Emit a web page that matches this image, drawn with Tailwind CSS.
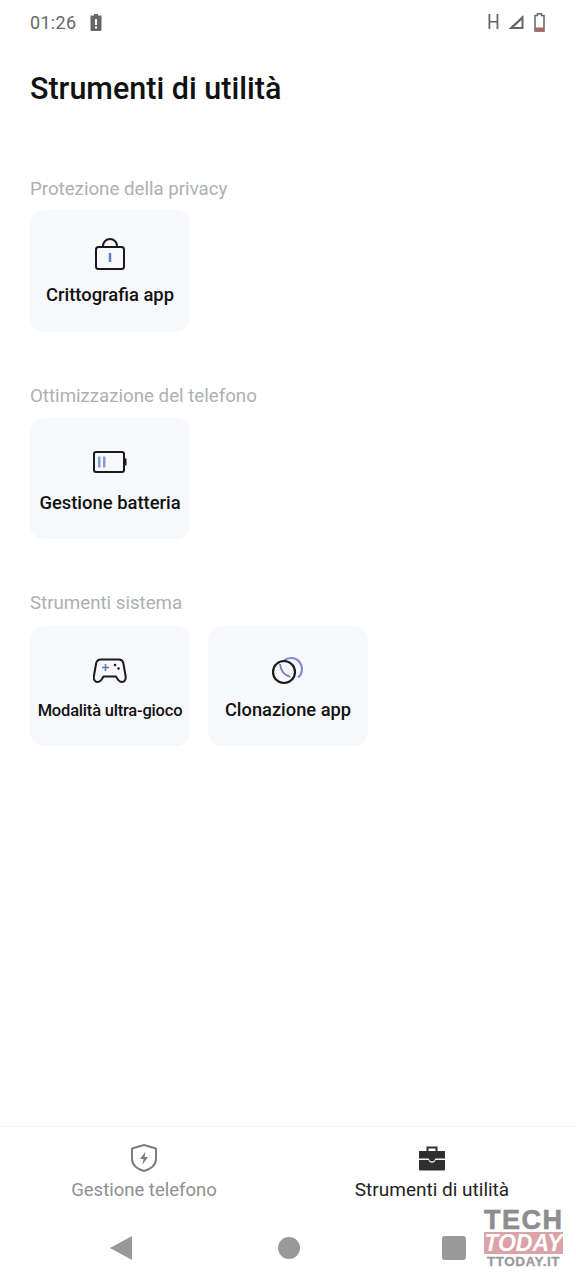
<!DOCTYPE html>
<html lang="en">
<head>
  <meta charset="UTF-8" />
  <meta name="viewport" content="width=device-width, initial-scale=1.0"/>
  <title>Strumenti di utilità</title>
  <script src="https://cdn.jsdelivr.net/npm/@tailwindcss/browser@4"></script>
</head>
<body class="bg-white font-['Roboto',sans-serif] text-[#111]">
<div class="relative w-[576px] h-[1280px] overflow-hidden flex flex-col">

  <!-- status bar -->
  <div class="h-[44px] pl-[30px] pr-[31px] flex items-center justify-between text-[#666]">
    <div class="flex items-center gap-[14px]">
      <span class="text-[18px] tracking-[0.3px]">01:26</span>
      <svg width="12" height="17" viewBox="0 0 12 17"><path d="M4 0h4v1.500h2.500a1 1 0 0 1 1 1V16a1 1 0 0 1-1 1h-9a1 1 0 0 1-1-1V2.500a1 1 0 0 1 1-1H4z" fill="#666"/><rect x="5" y="5" width="2" height="6" fill="#fff"/><rect x="5" y="12.500" width="2" height="2" fill="#fff"/></svg>
    </div>
    <div class="flex items-center">
      <span class="text-[21px] leading-none scale-x-85">H</span>
      <svg class="ml-[7px]" width="16" height="16" viewBox="0 0 16 16"><path d="M15.500 1v14H.5z M13.500 6 6 13h7.500z" fill="#666" fill-rule="evenodd"/></svg>
      <svg class="ml-[10px]" width="11" height="19" viewBox="0 0 11 19"><path d="M3.500.75h4V2.500H10v15.500H1V2.500h2.500z" fill="none" stroke="#666" stroke-width="1.500"/><rect x="1" y="14.500" width="9" height="4" fill="#a8686c"/></svg>
    </div>
  </div>

  <h1 class="ml-[30px] mt-[26px] text-[30.5px] leading-[38px] font-medium text-[#111]">Strumenti di utilità</h1>

  <main class="px-[30px] pt-[69px] flex-1 flex flex-col gap-[52px]">
    <section>
      <h2 class="text-[18.7px] leading-[24px] text-[#adb0b3] mb-[9px]">Protezione della privacy</h2>
      <div class="flex gap-[18px]">
        <div class="w-[160px] h-[122px] rounded-[14px] bg-[#f7f8fc] flex flex-col items-center pt-[28px]">
          <svg width="32" height="34" viewBox="0 0 32 34" fill="none"><path d="M9 8a7 7 0 0 1 14 0" stroke="#1a1a1a" stroke-width="2"/><rect x="2" y="9" width="28" height="22" rx="2.500" stroke="#1a1a1a" stroke-width="2"/><rect x="14.750" y="15" width="2.500" height="9" fill="#5d7fc8"/></svg>
          <span class="mt-[11px] text-[18.4px] leading-[24px] font-medium whitespace-nowrap">Crittografia app</span>
        </div>
      </div>
    </section>

    <section>
      <h2 class="text-[18.7px] leading-[24px] text-[#adb0b3] mb-[10px]">Ottimizzazione del telefono</h2>
      <div class="flex gap-[18px]">
        <div class="w-[160px] h-[121px] rounded-[14px] bg-[#f7f8fc] flex flex-col items-center pt-[32px]">
          <svg width="34" height="24" viewBox="0 0 34 24" fill="none"><rect x="1" y="2" width="30" height="20" rx="2" stroke="#1a1a1a" stroke-width="2"/><path d="M32 8.500h1.500v7H32z" fill="#1a1a1a"/><rect x="5" y="6.500" width="2.500" height="11" fill="#7f9bd4"/><rect x="10" y="6.500" width="2.500" height="11" fill="#7f9bd4"/></svg>
          <span class="mt-[17px] text-[18.4px] leading-[24px] font-medium whitespace-nowrap">Gestione batteria</span>
        </div>
      </div>
    </section>

    <section>
      <h2 class="text-[18.7px] leading-[24px] text-[#adb0b3] mb-[11px]">Strumenti sistema</h2>
      <div class="flex gap-[18px]">
        <div class="w-[160px] h-[120px] rounded-[14px] bg-[#f7f8fc] flex flex-col items-center pt-[32px]">
          <svg width="34" height="26" viewBox="0 0 34 26" fill="none"><path d="M8 1.500h18c2.500 0 3.800 1.500 4.300 3.500l2.300 13c.6 3.500-1 6-3.600 6-2 0-3.200-1-4.500-3l-1.500-2.500H10.500L9 21c-1.300 2-2.500 3-4.500 3-2.600 0-4.200-2.500-3.600-6l2.300-13C3.700 3 5.500 1.500 8 1.500z" stroke="#1a1a1a" stroke-width="2" stroke-linejoin="round"/><path d="M9 9.500h7M12.500 6v7" stroke="#5d7fa8" stroke-width="1.600"/><circle cx="22" cy="7" r="1.300" fill="#1a1a1a"/><circle cx="25.500" cy="10.500" r="1.300" fill="#1a1a1a"/></svg>
          <span class="mt-[15px] text-[16.500px] leading-[24px] font-medium tracking-[-0.2px] whitespace-nowrap">Modalità ultra-gioco</span>
        </div>
        <div class="w-[160px] h-[120px] rounded-[14px] bg-[#f7f8fc] flex flex-col items-center pt-[30px]">
          <svg width="34" height="30" viewBox="0 0 34 30" fill="none"><path d="M13 4.500A11 11 0 0 1 27 21.500" stroke="#7d8bd0" stroke-width="2"/><path d="M9 8c.5 6 4 11 10.500 13" stroke="#6f7fb8" stroke-width="1.800"/><circle cx="13" cy="16" r="11" stroke="#1a1a1a" stroke-width="2.200"/></svg>
          <span class="mt-[12px] text-[18.3px] leading-[24px] font-medium whitespace-nowrap">Clonazione app</span>
        </div>
      </div>
    </section>
  </main>

  <!-- bottom tabs -->
  <nav class="h-[90px] border-t border-[#f6f6f6] flex">
    <div class="w-[288px] flex flex-col items-center pt-[16px]">
      <svg width="28" height="30" viewBox="0 0 28 30" fill="none"><path d="M14 2l12 3.500v10c0 6-5 10.500-12 12.500C7 26 2 21.500 2 15.500v-10z" stroke="#7d7d7d" stroke-width="2" stroke-linejoin="round"/><path d="M15.500 8.500 10 16h3.500l-1 5.500L18 14h-3.500z" fill="#7d7d7d"/></svg>
      <span class="mt-[5px] text-[18.5px] leading-[24px] text-[#8f8f8f] whitespace-nowrap">Gestione telefono</span>
    </div>
    <div class="w-[288px] flex flex-col items-center pt-[18px]">
      <svg width="28" height="26" viewBox="0 0 28 26" fill="none"><path d="M9.500 6V2.500h9V6" stroke="#2f2f2f" stroke-width="2"/><path d="M1 6h26v7.500H17a3 3 0 0 1-6 0H1z" fill="#2f2f2f"/><path d="M1 15h9.500a3.600 3.600 0 0 0 7 0H27v9.500a1 1 0 0 1-1 1H2a1 1 0 0 1-1-1z" fill="#2f2f2f"/></svg>
      <span class="mt-[7px] text-[19px] leading-[24px] text-[#222] whitespace-nowrap">Strumenti di utilità</span>
    </div>
  </nav>

  <!-- android nav -->
  <div class="h-[64px] flex items-start pt-[20px] pl-[110px]">
    <div class="w-[22px] h-[24px] bg-[#999] [clip-path:polygon(0_50%,100%_0,100%_100%)]"></div>
    <div class="w-[22px] h-[22px] rounded-full bg-[#999] mt-[1px] ml-[146px]"></div>
    <div class="w-[24px] h-[24px] rounded-[3px] bg-[#999] ml-[142px]"></div>
  </div>

  <!-- watermark -->
  <div class="absolute left-[484px] top-[1209px] w-[79px] flex flex-col items-stretch font-['Liberation_Sans',sans-serif] font-bold text-center leading-none">
    <span class="text-[27px] leading-[22px] tracking-[1.500px] text-[#8d8d8d] [-webkit-text-stroke:0.6px_#8d8d8d]">TECH</span>
    <span class="bg-[#dba3a8] text-white italic text-[23px] leading-[22px] mt-[1px]">TODAY</span>
    <span class="text-[13.5px] leading-[16px] tracking-[0.5px] text-[#9a9a9a] [-webkit-text-stroke:0.3px_#9a9a9a]">TTODAY.IT</span>
  </div>
</div>
</body>
</html>
